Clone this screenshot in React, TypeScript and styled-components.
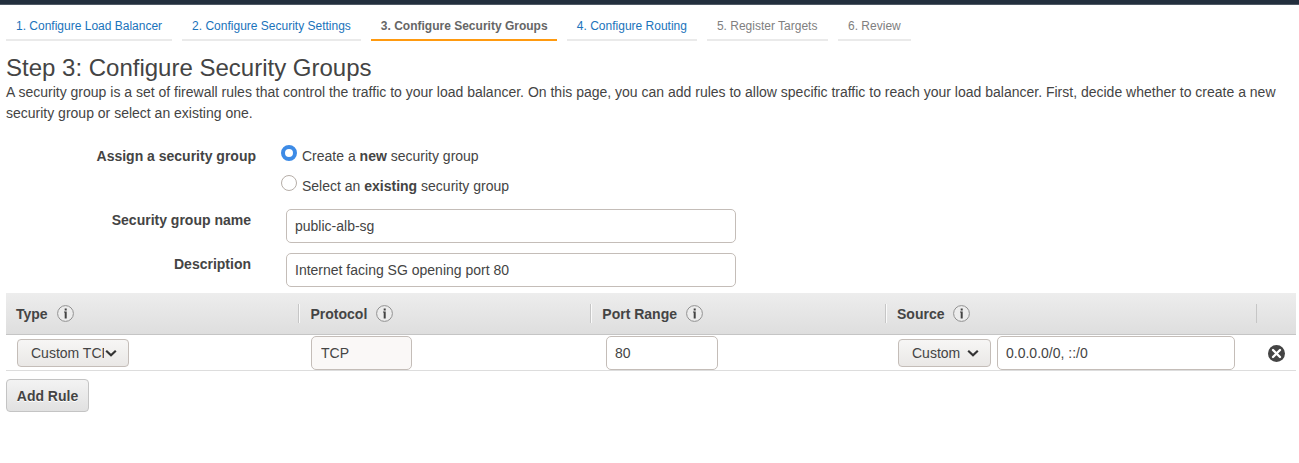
import React from "react";
import styled, { createGlobalStyle } from "styled-components";

const GlobalStyle = createGlobalStyle`
  *, *::before, *::after { box-sizing: border-box; }
  body {
    margin: 0;
    background: #fff;
    color: #444;
    font-family: "Liberation Sans", Arial, sans-serif;
    font-size: 14px;
    line-height: 21px;
  }
`;

const TopBar = styled.header`
  height: 5px;
  background: #232f3e;
  border-bottom: 1px solid #4f5965;
`;

const Page = styled.main`
  padding: 13px 3px 0 6px;
`;

const Steps = styled.nav`
  display: flex;
  gap: 10px;
`;

type StepState = "link" | "active" | "upcoming";
const stepColor = { link: "#1a73bb", active: "#666", upcoming: "#808080" };

const Step = styled.a<{ $state: StepState }>`
  height: 23px;
  padding: 0 ${(p) => ({ active: 9.3, upcoming: 10.6, link: 10 })[p.$state]}px 0 10px;
  font-size: 12px;
  line-height: 16px;
  white-space: nowrap;
  color: ${(p) => stepColor[p.$state]};
  font-weight: ${(p) => (p.$state === "active" ? 700 : 400)};
  border-bottom: 2px solid ${(p) => (p.$state === "active" ? "#ff9a0f" : "#eaeaea")};
`;

const Title = styled.h1`
  margin: 13px 0 0;
  font-size: 24px;
  line-height: 28px;
  font-weight: 400;
`;

const Intro = styled.p`
  margin: 0;
`;

const Form = styled.form`
  display: flex;
  flex-direction: column;
  padding-top: 21px;
`;

const FormRow = styled.div<{ $height: number }>`
  display: flex;
  height: ${(p) => p.$height}px;
`;

const Label = styled.label<{ $width: number }>`
  width: ${(p) => p.$width}px;
  padding-top: 1px;
  text-align: right;
  font-weight: 700;
`;

const Options = styled.div`
  display: flex;
  flex-direction: column;
  gap: 8px;
  margin-left: 25px;
`;

const Option = styled.label`
  display: flex;
  gap: 5px;
`;

const OptionText = styled.span`
  padding-top: 1px;
`;

const Radio = styled.span<{ $checked?: boolean }>`
  width: 16px;
  height: 16px;
  border-radius: 50%;
  background: #fff;
  border: ${(p) => (p.$checked ? "4px solid #3d8be6" : "1px solid #b6aea8")};
`;

const Input = styled.input<{ $width: number }>`
  width: ${(p) => p.$width}px;
  height: 34px;
  padding: 0 8px;
  border: 1px solid #c4bdb8;
  border-radius: 5px;
  background: #fff;
  color: #444;
  font: inherit;
  outline: none;

  &:disabled {
    padding-left: 9px;
    background: #faf8f7;
  }
`;

const FormInput = styled(Input)`
  margin-left: 35px;
`;

const Grid = styled.div`
  display: grid;
  grid-template-columns: 292px 292px 295px 371px 40px;
`;

const TableHead = styled(Grid)`
  height: 42px;
  margin-top: 6px;
  align-items: center;
  background: linear-gradient(#ededed, #dedede);
  border-bottom: 1px solid #c5c5c5;
`;

const HeadCell = styled.div<{ $indent?: number }>`
  display: flex;
  align-items: center;
  height: 19px;
  padding-left: ${(p) => p.$indent ?? 11}px;
  gap: 9px;
  font-weight: 700;

  & + & {
    border-left: 1px solid #c6c6c6;
    box-shadow: inset 1px 0 #fafafa;
  }

  & + &:last-child {
    box-shadow: none;
  }
`;

const HeadText = styled.span`
  padding-top: 2px;
`;

const TableRow = styled(Grid)`
  height: 36px;
  align-items: center;
  border-bottom: 1px solid #ddd;
`;

const Cell = styled.div<{ $indent: number }>`
  display: flex;
  align-items: center;
  gap: 6px;
  padding: 1px 0 0 ${(p) => p.$indent}px;
`;

const Select = styled.div<{ $width: number }>`
  display: flex;
  align-items: center;
  width: ${(p) => p.$width}px;
  height: 28px;
  padding: 0 11px 0 13px;
  border: 1px solid #c4bdb8;
  border-radius: 4px;
  background: linear-gradient(#f7f6f5, #eae8e6);
`;

const SelectText = styled.span`
  flex: 1;
  min-width: 0;
  margin-right: 1px;
  overflow: hidden;
  white-space: nowrap;
`;

const AddButton = styled.button`
  width: 83px;
  height: 33px;
  margin-top: 8px;
  padding: 2px 0 0;
  border: 1px solid #c4c4c4;
  border-radius: 4px;
  background: linear-gradient(#f3f3f3, #e1e1e1);
  color: #444;
  font: inherit;
  font-weight: 700;
  text-shadow: 0 1px #fff;
`;

const InfoIcon = () => (
  <svg width="17" height="17" viewBox="0 0 17 17">
    <circle cx="8.5" cy="8.5" r="7.9" fill="#ececec" stroke="#919191" />
    <path d="M7.7 3.6h2v1.8h-2zM7 6.6h2.7v7h-2v-6.2H7z" fill="#444" />
  </svg>
);

const Chevron = () => (
  <svg width="12" height="8" viewBox="0 0 12 8">
    <path d="M1.2 1.8 6 6.2 10.8 1.8" fill="none" stroke="#333" strokeWidth="2.2" />
  </svg>
);

const RemoveIcon = () => (
  <svg width="17" height="17" viewBox="0 0 17 17">
    <circle cx="8.5" cy="8.5" r="8.5" fill="#444" />
    <path d="M5 5 12 12M12 5 5 12" stroke="#fff" strokeWidth="2.4" strokeLinecap="round" />
  </svg>
);

const steps: { label: string; state: StepState }[] = [
  { label: "1. Configure Load Balancer", state: "link" },
  { label: "2. Configure Security Settings", state: "link" },
  { label: "3. Configure Security Groups", state: "active" },
  { label: "4. Configure Routing", state: "link" },
  { label: "5. Register Targets", state: "upcoming" },
  { label: "6. Review", state: "upcoming" },
];

export default function App() {
  return (
    <>
      <GlobalStyle />
      <TopBar />
      <Page>
        <Steps>
          {steps.map((s) => (
            <Step key={s.label} $state={s.state}>{s.label}</Step>
          ))}
        </Steps>
        <Title>Step 3: Configure Security Groups</Title>
        <Intro>
          A security group is a set of firewall rules that control the traffic to your load balancer. On this page, you
          can add rules to allow specific traffic to reach your load balancer. First, decide whether to create a new
          security group or select an existing one.
        </Intro>
        <Form>
          <FormRow $height={64}>
            <Label as="span" $width={250}>Assign a security group</Label>
            <Options>
              <Option>
                <Radio $checked />
                <OptionText>Create a <b>new</b> security group</OptionText>
              </Option>
              <Option>
                <Radio />
                <OptionText>Select an <b>existing</b> security group</OptionText>
              </Option>
            </Options>
          </FormRow>
          <FormRow $height={44}>
            <Label htmlFor="name" $width={245}>Security group name</Label>
            <FormInput id="name" $width={450} defaultValue="public-alb-sg" />
          </FormRow>
          <FormRow $height={34}>
            <Label htmlFor="description" $width={245}>Description</Label>
            <FormInput id="description" $width={450} defaultValue="Internet facing SG opening port 80" />
          </FormRow>
        </Form>
        <TableHead>
          <HeadCell $indent={10}><HeadText>Type</HeadText><InfoIcon /></HeadCell>
          <HeadCell $indent={11.5}><HeadText>Protocol</HeadText><InfoIcon /></HeadCell>
          <HeadCell $indent={11.3}><HeadText>Port Range</HeadText><InfoIcon /></HeadCell>
          <HeadCell><HeadText>Source</HeadText><InfoIcon /></HeadCell>
          <HeadCell />
        </TableHead>
        <TableRow>
          <Cell $indent={11}>
            <Select $width={112}><SelectText>Custom TCP</SelectText><Chevron /></Select>
          </Cell>
          <Cell $indent={13}><Input $width={101} defaultValue="TCP" disabled /></Cell>
          <Cell $indent={16}><Input $width={112} defaultValue="80" /></Cell>
          <Cell $indent={13}>
            <Select $width={93}><SelectText>Custom</SelectText><Chevron /></Select>
            <Input $width={238} defaultValue="0.0.0.0/0, ::/0" />
          </Cell>
          <Cell $indent={12}><RemoveIcon /></Cell>
        </TableRow>
        <AddButton>Add Rule</AddButton>
      </Page>
    </>
  );
}
